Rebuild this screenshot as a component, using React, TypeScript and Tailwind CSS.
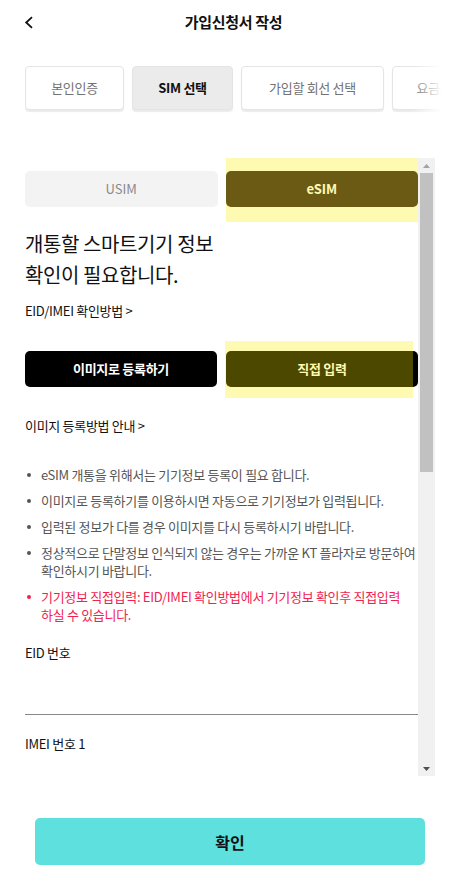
import React from 'react';

const font = { fontFamily: '"Noto Sans CJK KR", "Noto Sans", sans-serif' };

const steps = [
  { label: '본인인증', w: 'w-[99px]', active: false },
  { label: 'SIM 선택', w: 'w-[101px]', active: true },
  { label: '가입할 회선 선택', w: 'w-[143px]', active: false },
  { label: '요금제 선택', w: 'w-[110px]', active: false },
];

const notes = [
  { text: 'eSIM 개통을 위해서는 기기정보 등록이 필요 합니다.', red: false },
  { text: '이미지로 등록하기를 이용하시면 자동으로 기기정보가 입력됩니다.', red: false },
  { text: '입력된 정보가 다를 경우 이미지를 다시 등록하시기 바랍니다.', red: false },
  { text: '정상적으로 단말정보 인식되지 않는 경우는 가까운 KT 플라자로 방문하여 확인하시기 바랍니다.', red: false },
  { text: '기기정보 직접입력: EID/IMEI 확인방법에서 기기정보 확인후 직접입력 하실 수 있습니다.', red: true },
];

function Chevron() {
  return (
    <svg width="10" height="13" viewBox="0 0 10 13" fill="none">
      <path d="M8 1.2L2.2 6.5L8 11.8" stroke="#111" strokeWidth="1.8" />
    </svg>
  );
}

function Scrollbar() {
  return (
    <div className="w-[17px] h-full bg-[#f1f1f1] flex flex-col items-center">
      <div className="h-[15px] flex items-center justify-center">
        <svg width="7" height="4" viewBox="0 0 7 4">
          <path d="M0 4L3.5 0L7 4Z" fill="#a3a3a3" />
        </svg>
      </div>
      <div className="w-[13px] h-[299px] bg-[#c1c1c1]" />
      <div className="flex-1" />
      <div className="h-[15px] flex items-center justify-center">
        <svg width="7" height="4" viewBox="0 0 7 4">
          <path d="M0 0L7 0L3.5 4Z" fill="#505050" />
        </svg>
      </div>
    </div>
  );
}

export default function App() {
  return (
    <div className="w-[467px] h-[876px] bg-white text-[#111] overflow-hidden" style={font}>
      {/* Header */}
      <div className="relative h-[44px] flex items-center justify-center">
        <div className="absolute left-[24px] top-[16px]">
          <Chevron />
        </div>
        <h1 className="text-[15px] font-bold tracking-[-0.3px]">가입신청서 작성</h1>
      </div>

      {/* Steps */}
      <div className="relative mx-[25px] mt-[22px] h-[48px] overflow-hidden">
        <div className="flex gap-[8px]">
          {steps.map((s) => (
            <div
              key={s.label}
              className={`${s.w} shrink-0 h-[44px] rounded-[4px] border border-[#e4e4e4] shadow-[0_2px_1px_rgba(0,0,0,0.08)] flex items-center justify-center text-[13px] tracking-[-0.3px] ${
                s.active ? 'bg-[#ebebeb] font-bold text-[#111]' : 'bg-white text-[#727272]'
              }`}
            >
              {s.label}
            </div>
          ))}
        </div>
        <div className="absolute right-0 top-0 h-full w-[30px] bg-gradient-to-r from-white/0 to-white" />
      </div>

      {/* Scroll area */}
      <div className="mt-[44px] flex h-[618px] pl-[25px] pr-[32px]">
        <div className="flex-1 overflow-hidden pt-[13px]">
          <div className="flex gap-[8px]">
            <div className="flex-1 h-[36px] rounded-[5px] bg-[#f3f3f3] flex items-center justify-center text-[13px] text-[#8a8a8a]">
              USIM
            </div>
            <div className="relative flex-1 h-[36px]">
              <div className="h-full rounded-[5px] bg-[#2c1b1d] flex items-center justify-center text-[13px] font-bold text-white">
                eSIM
              </div>
              <div className="absolute left-0 top-[-13px] w-[198px] h-[64px] bg-[rgba(255,240,0,0.3)] pointer-events-none" />
            </div>
          </div>

          <h2 className="mt-[21px] text-[20px] leading-[31px] tracking-[-0.4px] text-[#111]">
            개통할 스마트기기 정보
            <br />
            확인이 필요합니다.
          </h2>

          <p className="mt-[12px] text-[13px] leading-[18px] tracking-[-0.3px]">EID/IMEI 확인방법 &gt;</p>

          <div className="mt-[31px] flex gap-[9px]">
            <button className="flex-1 h-[36px] rounded-[5px] bg-black text-white text-[13px] font-bold tracking-[-0.3px]">
              이미지로 등록하기
            </button>
            <div className="relative flex-1 h-[36px]">
              <button className="w-full h-full rounded-[5px] bg-black text-white text-[13px] font-bold tracking-[-0.3px]">
                직접 입력
              </button>
              <div className="absolute left-[-1px] top-[-10px] w-[188px] h-[57px] bg-[rgba(255,240,0,0.3)] pointer-events-none" />
            </div>
          </div>

          <p className="mt-[30px] text-[13px] leading-[18px] tracking-[-0.3px]">이미지 등록방법 안내 &gt;</p>

          <ul className="mt-[31px] flex flex-col gap-[8px]">
            {notes.map((n) => (
              <li
                key={n.text}
                className={`flex text-[13px] leading-[18px] tracking-[-0.3px] break-keep ${n.red ? 'text-[#f2224f]' : 'text-[#555]'}`}
              >
                <span className="w-[16px] shrink-0 flex justify-start pl-[2px] pt-[7px]">
                  <span className={`block w-[4px] h-[4px] rounded-full ${n.red ? 'bg-[#f2224f]' : 'bg-[#555]'}`} />
                </span>
                <span>{n.text}</span>
              </li>
            ))}
          </ul>

          <p className="mt-[20px] text-[13px] leading-[18px] tracking-[-0.3px]">EID 번호</p>
          <div className="h-[53px] border-b border-[#888]" />
          <p className="mt-[20px] text-[13px] leading-[18px] tracking-[-0.3px]">IMEI 번호 1</p>
        </div>
        <Scrollbar />
      </div>

      {/* Confirm */}
      <div className="mt-[42px] px-[35px] pr-[42px]">
        <button className="w-full h-[47px] rounded-[5px] bg-[#5ee0de] text-[16px] font-bold text-[#111]">확인</button>
      </div>
    </div>
  );
}
